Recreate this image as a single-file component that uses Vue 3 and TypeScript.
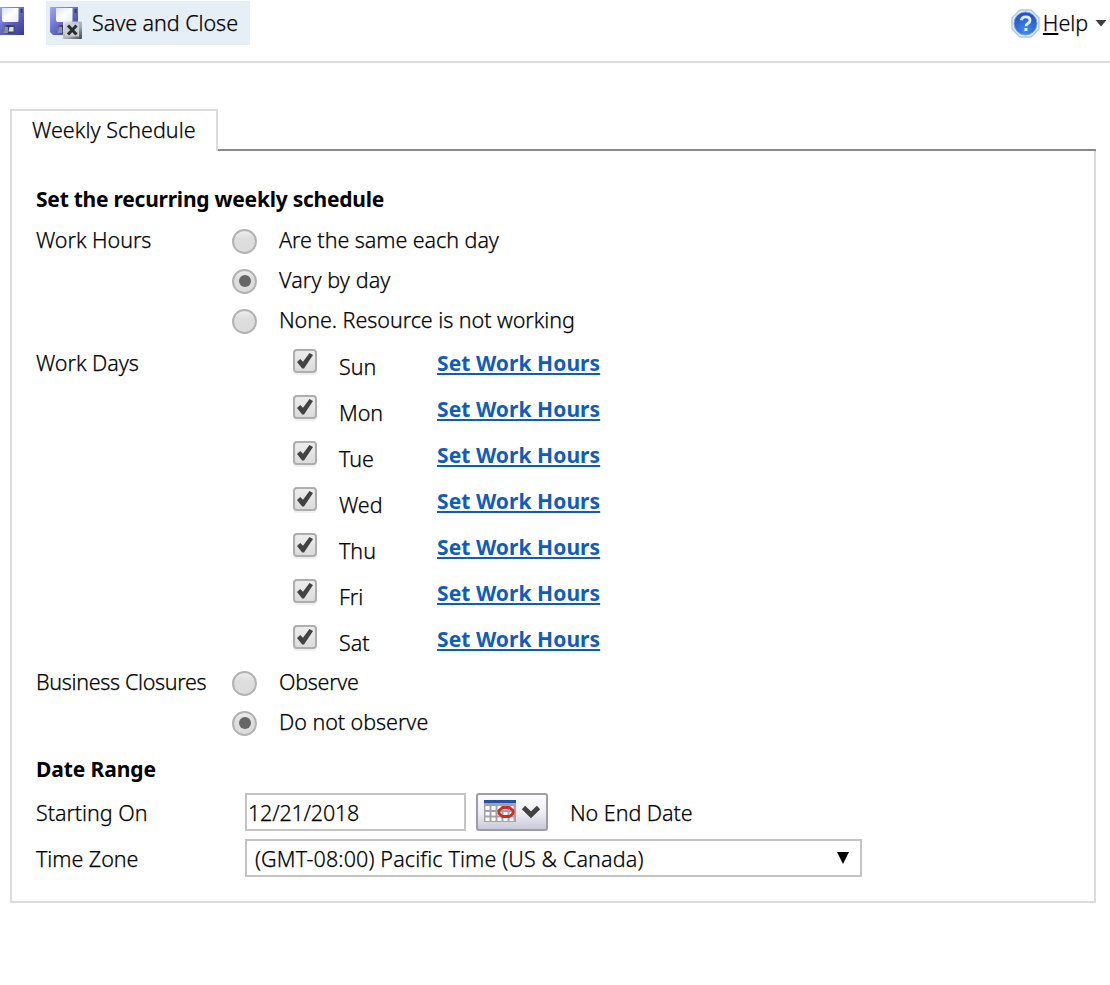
<script setup lang="ts">
import { ref } from 'vue'

type Hours = 'same' | 'vary' | 'none'
type Closure = 'observe' | 'ignore'

const workHours = ref<Hours>('vary')
const closures = ref<Closure>('ignore')
const startDate = ref('12/21/2018')

const hourOptions: { id: Hours; label: string }[] = [
  { id: 'same', label: 'Are the same each day' },
  { id: 'vary', label: 'Vary by day' },
  { id: 'none', label: 'None. Resource is not working' },
]
const closureOptions: { id: Closure; label: string }[] = [
  { id: 'observe', label: 'Observe' },
  { id: 'ignore', label: 'Do not observe' },
]
const days = ref(
  ['Sun', 'Mon', 'Tue', 'Wed', 'Thu', 'Fri', 'Sat'].map((name) => ({ name, on: true })),
)
</script>

<template>
  <div class="page">
    <svg class="defs" width="0" height="0">
      <defs>
        <linearGradient id="disk" x1="0" y1="0" x2="1" y2="1">
          <stop offset="0" stop-color="#a3a6f0" />
          <stop offset="0.5" stop-color="#666bc8" />
          <stop offset="1" stop-color="#34398f" />
        </linearGradient>
        <linearGradient id="paper" x1="0" y1="0" x2="1" y2="1">
          <stop offset="0" stop-color="#d5e2f8" />
          <stop offset="0.5" stop-color="#ffffff" />
          <stop offset="1" stop-color="#e6ecf8" />
        </linearGradient>
        <linearGradient id="shutter" x1="0" y1="0" x2="1" y2="0">
          <stop offset="0" stop-color="#6f78a0" />
          <stop offset="0.4" stop-color="#343a52" />
          <stop offset="1" stop-color="#4a4f78" />
        </linearGradient>
        <linearGradient id="closeBox" x1="0" y1="0" x2="1" y2="1">
          <stop offset="0" stop-color="#eeeeee" />
          <stop offset="0.6" stop-color="#a5abb2" />
          <stop offset="1" stop-color="#36424e" />
        </linearGradient>
        <radialGradient id="helpBlue" cx="0.5" cy="0.8" r="0.75">
          <stop offset="0" stop-color="#3f8cf5" />
          <stop offset="1" stop-color="#2250c4" />
        </radialGradient>
        <symbol id="floppy" viewBox="0 0 28 28">
          <path d="M0 0H28V28H3L0 25Z" fill="url(#disk)" />
          <path d="M6 1H22.500V13.500Q22.500 15 21 15H8Q6 15 6 13Z" fill="url(#paper)" />
          <path d="M24.500 2H26.500V6H24.500Z" fill="#343981" />
          <path d="M7 18H19.500V26.500H7Z" fill="url(#shutter)" />
          <path d="M9 20H12V26H8Z" fill="#8790ac" />
          <path d="M13.500 20H17.500V24.500H12.500Z" fill="#d5dee8" />
        </symbol>
      </defs>
    </svg>

    <header class="toolbar">
      <button class="tool save" aria-label="Save">
        <svg class="floppy" width="28" height="28"><use href="#floppy" /></svg>
      </button>
      <button class="tool save-close">
        <svg width="32" height="32" viewBox="0 0 32 32">
          <use href="#floppy" width="28" height="28" />
          <rect x="13" y="14.500" width="19" height="17.500" rx="1" fill="url(#closeBox)" />
          <rect x="15" y="16.500" width="14" height="13" fill="#c9ccd0" />
          <path d="M18 18.500L26.500 27.500M26.500 18.500L18 27.500" stroke="#292b30" stroke-width="3" />
        </svg>
        <span>Save and Close</span>
      </button>
      <div class="help">
        <svg width="29" height="29" viewBox="0 0 29 29">
          <path d="M9 1H20L28 9V20L20 28H9L1 20V9Z" fill="#e6f1fa" stroke="#a9cbe6" stroke-width="1.500" />
          <circle cx="14.500" cy="14.500" r="11.500" fill="url(#helpBlue)" stroke="#7ea4dd" stroke-width="1" />
          <path d="M10.300 11.300Q10.800 7.800 14.800 7.800Q19 7.800 19 11.200Q19 13.200 16.800 14.400Q15 15.400 15 17.300" fill="none" stroke="#e4eefb" stroke-width="2.800" />
          <rect x="13.400" y="19" width="3" height="3" fill="#e4eefb" />
        </svg>
        <span><u>H</u>elp</span>
        <svg class="caret" width="12" height="7" viewBox="0 0 12 7"><path d="M0.500 0H11.500L6 6.500Z" fill="#3f3f3f" /></svg>
      </div>
    </header>

    <main class="schedule">
      <nav class="tabs">
        <div class="tab">Weekly Schedule</div>
        <div class="tab-line"></div>
      </nav>
      <section class="panel">
        <h2>Set the recurring weekly schedule</h2>

        <div class="group">
          <div class="caption">Work Hours</div>
          <div class="radios">
            <label v-for="o in hourOptions" :key="o.id" class="radio-row" :class="o.id">
              <input v-model="workHours" type="radio" name="hours" :value="o.id" />
              <span>{{ o.label }}</span>
            </label>
          </div>
        </div>

        <div class="group">
          <div class="caption days-caption">Work Days</div>
          <div class="days">
            <div v-for="d in days" :key="d.name" class="day-row">
              <button class="check" :aria-label="d.name" @click="d.on = !d.on">
                <svg v-if="d.on" width="16" height="16" viewBox="0 0 16 16">
                  <path d="M0 9L3.200 6L6 8.800L12.500 0L16 2.100L7 15.500H5.200Z" fill="#424242" />
                </svg>
              </button>
              <span class="day">{{ d.name }}</span>
              <a class="link" href="#">Set Work Hours</a>
            </div>
          </div>
        </div>

        <div class="group">
          <div class="caption closures-caption">Business Closures</div>
          <div class="radios">
            <label v-for="o in closureOptions" :key="o.id" class="radio-row" :class="o.id">
              <input v-model="closures" type="radio" name="closures" :value="o.id" />
              <span>{{ o.label }}</span>
            </label>
          </div>
        </div>

        <h2 class="range">Date Range</h2>
        <div class="field-row">
          <div class="caption">Starting On</div>
          <input v-model="startDate" class="date" type="text" />
          <button class="picker" aria-label="Choose date">
            <svg width="60" height="24" viewBox="0 0 60 24">
              <rect x="1" y="0" width="32" height="22" fill="#a3a3a3" />
              <path d="M2.500 6H6.500V10H2.500ZM8.500 6H12.500V10H8.500ZM14.500 6H18.500V10H14.500ZM20.500 6H24.500V10H20.500ZM26.500 6H30.500V10H26.500ZM2.500 12H6.500V15.500H2.500ZM8.500 12H12.500V15.500H8.500ZM14.500 12H18.500V15.500H14.500ZM20.500 12H24.500V15.500H20.500ZM26.500 12H30.500V15.500H26.500ZM2.500 17.500H6.500V21H2.500ZM8.500 17.500H12.500V21H8.500ZM14.500 17.500H18.500V21H14.500ZM20.500 17.500H24.500V21H20.500ZM26.500 17.500H30.500V21H26.500Z" fill="#fff" />
              <rect x="1" y="0" width="32" height="3" fill="#2450a8" />
              <path d="M19.500 7.500H26.500L30 10.500V13.500L26.500 16.500H19.500L16 13.500V10.500Z" fill="none" stroke="#d42828" stroke-width="2.800" stroke-linejoin="round" />
              <path d="M40.500 7.500L48 14.800L55.500 7.500" fill="none" stroke="#424242" stroke-width="4.800" />
            </svg>
          </button>
          <span class="no-end">No End Date</span>
        </div>
        <div class="field-row">
          <div class="caption">Time Zone</div>
          <div class="zone">
            <span>(GMT-08:00) Pacific Time (US &amp; Canada)</span>
            <svg width="12" height="12" viewBox="0 0 12 12"><path d="M0 0H12L6 12Z" fill="#000" /></svg>
          </div>
        </div>
      </section>
    </main>
  </div>
</template>

<style>
html,
body {
  margin: 0;
  background: #fff;
}
</style>

<style scoped>
.page {
  height: 985px;
  box-sizing: border-box;
  overflow: hidden;
  color: #000;
  font: 300 21.5px/30px 'Noto Sans', 'Open Sans', sans-serif;
  letter-spacing: -0.05px;
  -webkit-text-stroke: 0.25px currentColor;
  white-space: nowrap;
}
.defs {
  position: absolute;
}
svg {
  display: block;
  flex: none;
}
button,
input {
  font: inherit;
  letter-spacing: inherit;
  color: inherit;
  box-sizing: border-box;
  margin: 0;
}
.toolbar {
  height: 63px;
  box-sizing: border-box;
  border-bottom: 2px solid #dfdfdf;
  display: flex;
  align-items: flex-start;
  padding-top: 1px;
}
.tool {
  border: 0;
  background: none;
  display: flex;
  height: 44px;
  padding: 6px 0 0;
}
.save {
  width: 24px;
  overflow: hidden;
  justify-content: flex-end;
}
.save-close {
  margin-left: 22px;
  width: 204px;
  padding-left: 4px;
  gap: 10px;
  background: #e6eef6;
}
.save-close span {
  margin-top: 1px;
}
.help {
  margin-left: auto;
  padding: 7px 3px 0 0;
  display: flex;
  align-items: center;
}
.help svg:first-child {
  margin-top: 1px;
}
.help span {
  margin: 0 7px 0 3px;
}
.help u {
  text-decoration-thickness: 2px;
  text-underline-offset: 2px;
}
.schedule {
  margin: 46px 14px 0 10px;
}
.tabs {
  display: flex;
  align-items: flex-end;
}
.tab {
  width: 208px;
  height: 42px;
  box-sizing: border-box;
  border: 2px solid #dcdcdc;
  border-bottom: 0;
  padding: 4px 0 0 20px;
  letter-spacing: 0.03px;
}
.tab-line {
  flex: 1;
  height: 2px;
  background: #888990;
}
.panel {
  height: 752px;
  box-sizing: border-box;
  border: 2px solid #dcdcdc;
  border-top: 0;
  padding: 33px 0 0 24px;
}
h2 {
  margin: 0;
  height: 37px;
  font-size: 21px;
  font-weight: 700;
  line-height: 30px;
  letter-spacing: -0.24px;
  -webkit-text-stroke: 0;
}
.group {
  display: flex;
}
.caption {
  width: 196px;
  flex: none;
  padding-top: 4px;
}
.days-caption {
  padding-top: 7px;
}
.closures-caption {
  letter-spacing: -0.33px;
}
.radio-row {
  display: flex;
  align-items: center;
  height: 40px;
  gap: 22px;
}
.radio-row input {
  appearance: none;
  width: 25px;
  height: 25px;
  border: 2px solid #b2b2b2;
  border-radius: 50%;
  background: linear-gradient(#ececec, #dedede 38%, #dcdcdc);
  display: grid;
  place-items: center;
}
.radio-row input:checked::after {
  content: '';
  width: 12px;
  height: 12px;
  border-radius: 50%;
  background: #666;
}
.radio-row span {
  margin-top: -2px;
}
.radio-row.vary {
  letter-spacing: 0.1px;
}
.radio-row.observe {
  letter-spacing: -0.3px;
}
.days {
  padding: 0 0 0 61px;
}
.day-row {
  height: 46px;
  display: flex;
  align-items: flex-start;
}
.check {
  margin-top: 8px;
  width: 24px;
  height: 24px;
  padding: 0;
  border: 2px solid #aeaeae;
  border-radius: 4px;
  background: linear-gradient(#ededed, #dcdcdc);
  box-shadow: 0 2px 1px #eeeeee;
  display: grid;
  place-items: center;
}
.day {
  width: 98px;
  margin: 11px 0 0 22px;
}
.link {
  margin-top: 7px;
  font-size: 21px;
  font-weight: 700;
  letter-spacing: 0.06px;
  -webkit-text-stroke: 0;
  color: #115cb9;
  text-decoration: underline;
  text-decoration-thickness: 2px;
  text-underline-offset: 2px;
  text-decoration-skip-ink: none;
}
.range {
  margin-top: 11px;
  height: 39px;
  letter-spacing: -0.1px;
}
.field-row {
  display: flex;
  height: 46px;
}
.field-row .caption {
  width: 209px;
  padding-top: 5px;
}
.date {
  width: 221px;
  height: 38px;
  border: 2px solid #c4c4c4;
  padding: 0 0 0 1px;
  outline: 0;
  background: #fff;
  letter-spacing: -0.2px;
}
.picker {
  margin-left: 10px;
  width: 72px;
  height: 38px;
  padding: 0 0 0 5px;
  border: 2px solid #9d9da8;
  border-radius: 3px;
  background: linear-gradient(#fdfdfe, #ececf4 55%, #c8c8da);
}
.no-end {
  margin: 5px 0 0 22px;
}
.zone {
  width: 617px;
  height: 38px;
  box-sizing: border-box;
  border: 2px solid #c4c4c4;
  display: flex;
  justify-content: space-between;
  padding: 3px 11px 0 8px;
  letter-spacing: 0.14px;
}
.zone svg {
  margin-top: 8px;
}
</style>
